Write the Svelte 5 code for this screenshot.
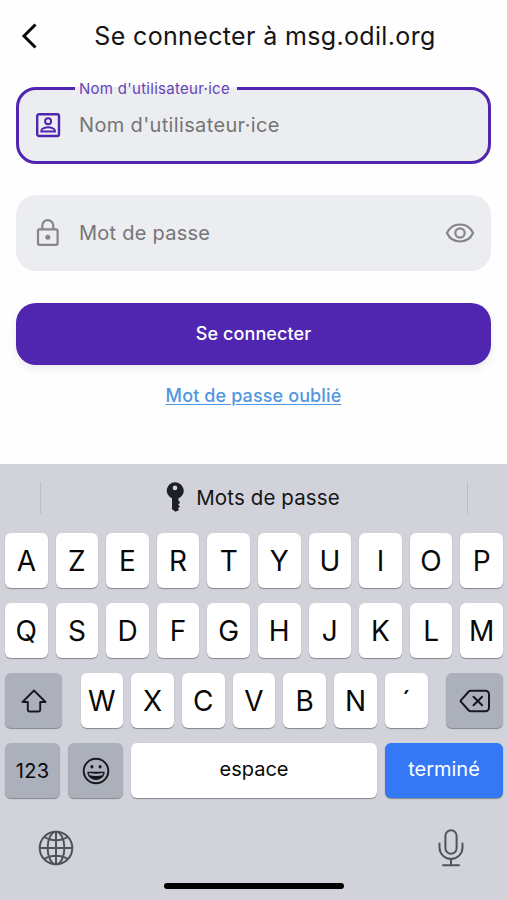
<script lang="ts">
    const topRow = ['A', 'Z', 'E', 'R', 'T', 'Y', 'U', 'I', 'O', 'P'];
    const homeRow = ['Q', 'S', 'D', 'F', 'G', 'H', 'J', 'K', 'L', 'M'];
    const bottomRow = ['W', 'X', 'C', 'V', 'B', 'N', '´'];
</script>

<div class="screen">
    <header class="header">
        <button class="back" aria-label="Retour">
            <svg width="18" height="28" viewBox="0 0 18 28">
                <path d="M16.500 2.500 L5 14 L16.500 25.500" fill="none" stroke="#0a0a0a" stroke-width="3" />
            </svg>
        </button>
        <h1 class="title">Se connecter à msg.odil.org</h1>
    </header>

    <main class="form">
        <fieldset class="field focused">
            <legend>Nom d'utilisateur·ice</legend>
            <svg class="lead" width="32" height="32" viewBox="0 0 32 32" fill="none" stroke="currentColor" stroke-width="2.400">
                <rect x="5.200" y="5.200" width="21.800" height="21.800" rx="1.800" />
                <circle cx="16.100" cy="12.300" r="3" stroke-width="2" />
                <path d="M9.300 22.600v-.8c0-2.300 4.300-3.600 6.800-3.600s6.800 1.300 6.800 3.600v.8z" stroke-width="2" />
            </svg>
            <span class="placeholder">Nom d'utilisateur·ice</span>
        </fieldset>

        <div class="field password">
            <svg class="lead" width="32" height="32" viewBox="0 0 32 32" fill="none" stroke="currentColor" stroke-width="2.200">
                <rect x="6" y="12.300" width="19.600" height="15.500" rx="1.500" />
                <path d="M10.300 12.300V8.600a5.500 5.500 0 0 1 11 0V12.300" />
                <circle cx="15.800" cy="20.300" r="2.500" fill="currentColor" stroke="none" />
            </svg>
            <span class="placeholder">Mot de passe</span>
            <svg class="eye" width="30" height="24" viewBox="0 0 30 24" fill="none" stroke="currentColor" stroke-width="2.200">
                <path d="M2 12C4.500 6.500 9.300 3.500 15 3.500S25.500 6.500 28 12C25.500 17.500 20.700 20.500 15 20.500S4.500 17.500 2 12z" />
                <circle cx="15" cy="12" r="4.700" />
            </svg>
        </div>

        <button class="submit">Se connecter</button>
        <a class="forgot" href="#forgot">Mot de passe oublié</a>
    </main>

    <section class="keyboard">
        <div class="suggestions">
            <svg width="18" height="30" viewBox="0 0 18 30">
                <path
                    fill="#1f2023"
                    fill-rule="evenodd"
                    d="M9 0.300a8.700 8.300 0 0 1 3.500 15.900v2.500l1.700 1.800-2 2 1.700 1.900-1.900 2 1.200 1.500L9.500 29.800 6 27.300V16.200A8.700 8.300 0 0 1 9 .3zM9 3.600a2.300 2.300 0 1 0 0 4.600 2.300 2.300 0 0 0 0-4.600z"
                />
            </svg>
            <span>Mots de passe</span>
        </div>

        <div class="row">
            {#each topRow as letter}
                <button class="key">{letter}</button>
            {/each}
        </div>
        <div class="row">
            {#each homeRow as letter}
                <button class="key">{letter}</button>
            {/each}
        </div>
        <div class="row spread">
            <button class="key dark wide" aria-label="Majuscule">
                <svg width="28" height="26" viewBox="0 0 28 26">
                    <path d="M14 2.500 L25.500 14 H20.200 V22 a1.500 1.500 0 0 1-1.500 1.500 H9.300 A1.500 1.500 0 0 1 7.800 22 V14 H2.500z" fill="none" stroke="#16181d" stroke-width="1.900" stroke-linejoin="round" />
                </svg>
            </button>
            <div class="letters">
                {#each bottomRow as letter}
                    <button class="key">{letter}</button>
                {/each}
            </div>
            <button class="key dark wide" aria-label="Supprimer">
                <svg width="32" height="24" viewBox="0 0 32 24" fill="none" stroke="#16181d" stroke-width="2" stroke-linejoin="round" stroke-linecap="round">
                    <path d="M11.800 1.700H26.500a3.500 3.500 0 0 1 3.500 3.500V18.800a3.500 3.500 0 0 1-3.500 3.500H11.800a3 3 0 0 1-2-.8L2.300 13.200a1.700 1.700 0 0 1 0-2.400L9.800 2.500a3 3 0 0 1 2-.8z" />
                    <path d="M14.500 7.700l8.600 8.600M23.100 7.700l-8.600 8.600" />
                </svg>
            </button>
        </div>
        <div class="row">
            <button class="key dark small numbers">123</button>
            <button class="key dark small" aria-label="Emoji">
                <svg width="28" height="28" viewBox="0 0 28 28">
                    <circle cx="14" cy="14" r="12.300" fill="none" stroke="#16181d" stroke-width="1.900" />
                    <ellipse cx="9.900" cy="9.800" rx="1.500" ry="1.700" fill="#16181d" />
                    <ellipse cx="18.100" cy="9.800" rx="1.500" ry="1.700" fill="#16181d" />
                    <path d="M5.300 14.800h17.400c0 4.700-3.700 8.100-8.700 8.100s-8.700-3.400-8.700-8.100z" fill="#16181d" />
                    <path d="M6.800 16.100c4.800.8 9.600.8 14.400 0l-.8 2.200c-4.300 1-8.500 1-12.800 0z" fill="#abb0bb" />
                </svg>
            </button>
            <button class="key space">espace</button>
            <button class="key done">terminé</button>
        </div>

        <div class="bottom">
            <svg width="36" height="36" viewBox="0 0 36 36" fill="none" stroke="#50535a" stroke-width="2">
                <circle cx="18" cy="18" r="16.300" />
                <ellipse cx="18" cy="18" rx="8.400" ry="16.300" />
                <path d="M18 1.500v33M1.500 18h33M6.200 6.800c6.500 4.600 17.100 4.600 23.600 0M6.200 29.200c6.500-4.600 17.100-4.600 23.600 0" />
            </svg>
            <svg width="28" height="38" viewBox="0 0 28 38" fill="none" stroke="#50535a" stroke-width="2" stroke-linecap="round">
                <rect x="8.400" y="1.200" width="11.200" height="23.600" rx="5.600" />
                <path d="M2.500 14.500v4a11.500 11.500 0 0 0 23 0V14.500M14 30v6M6 36.300h16" />
            </svg>
        </div>
        <div class="home-bar"></div>
    </section>
</div>

<style>
    :global(body) {
        margin: 0;
        background: #fefefe;
    }
    .screen {
        display: flex;
        flex-direction: column;
        width: 507px;
        height: 900px;
        overflow: hidden;
        color: #151515;
        font-family: 'Inter', sans-serif;
    }
    button {
        margin: 0;
        padding: 0;
        border: none;
        background: none;
        color: inherit;
        font-family: inherit;
    }
    svg {
        display: block;
        flex: none;
    }

    /* title bar */
    .header {
        display: grid;
        grid-template-columns: 60px 1fr 37px;
        align-items: center;
        height: 72px;
    }
    .back {
        padding-left: 19px;
    }
    .title {
        margin: 0;
        font-size: 25px;
        font-weight: 400;
        text-align: center;
        letter-spacing: 0.35px;
        white-space: nowrap;
    }

    /* login form */
    .form {
        display: flex;
        flex-direction: column;
        height: 392px;
        padding: 0 16px;
        box-sizing: border-box;
    }
    .field {
        display: flex;
        align-items: center;
        box-sizing: border-box;
        margin: 0;
        background: #ecedf0;
        border-radius: 20px;
        color: #858688;
    }
    .focused {
        height: 86px;
        margin-top: 6px;
        padding: 11px 15px 0 13px;
        border: 3px solid #5026b0;
        color: #5026b0;
    }
    legend {
        height: 20px;
        margin-left: 43px;
        padding: 0 7px 0 4px;
        color: #6644ba;
        font-size: 15px;
        line-height: 21px;
        letter-spacing: 0.28px;
        white-space: nowrap;
    }
    .placeholder {
        margin-left: 15px;
        flex: 1;
        color: #747577;
        font-size: 20px;
        letter-spacing: 0.35px;
    }
    .password {
        height: 76px;
        margin-top: 31px;
        padding: 0 16px;
    }
    .password .placeholder {
        letter-spacing: 0.25px;
    }
    .submit {
        height: 62px;
        margin-top: 32px;
        padding-bottom: 2px;
        border-radius: 20px;
        background: #5026b0;
        box-shadow: 0 4px 8px rgba(0, 0, 0, 0.08);
        color: #fff;
        font-size: 18px;
        font-weight: 500;
        letter-spacing: 0.1px;
    }
    .forgot {
        align-self: center;
        margin-top: 20px;
        color: #5097df;
        font-size: 18px;
        font-weight: 500;
        line-height: 22px;
        letter-spacing: 0.12px;
        text-underline-offset: 2px;
    }

    /* on-screen keyboard */
    .keyboard {
        display: flex;
        flex-direction: column;
        flex: 1;
        gap: 15px;
        padding: 0 4px 0 5px;
        background: #d1d2da;
    }
    .suggestions {
        display: flex;
        align-items: center;
        justify-content: center;
        gap: 12px;
        height: 32px;
        margin: 18px 35px 4px;
        padding: 0 2px 2px 0;
        box-sizing: border-box;
        border-left: 1px solid #bdbec5;
        border-right: 1px solid #bdbec5;
        font-size: 20.5px;
        letter-spacing: 0.12px;
    }
    .row {
        display: flex;
        gap: 8px;
        height: 55px;
    }
    .spread {
        justify-content: space-between;
    }
    .letters {
        display: flex;
        gap: 8px;
        width: 347px;
    }
    .key {
        display: flex;
        flex: 1 1 0;
        align-items: center;
        justify-content: center;
        border-radius: 6px;
        background: #fff;
        box-shadow: 0 1px 1px #85878d;
        color: #080808;
        font-size: 28px;
    }
    .dark {
        background: #abb0bb;
    }
    .wide {
        flex: none;
        width: 57px;
    }
    .small {
        flex: none;
        width: 55px;
    }
    .numbers {
        font-size: 20px;
        letter-spacing: 0.3px;
    }
    .space {
        padding-bottom: 3px;
        font-size: 20px;
    }
    .done {
        flex: none;
        width: 118px;
        box-sizing: border-box;
        padding-bottom: 3px;
        background: #3478f6;
        color: #fff;
        font-size: 20px;
    }
    .bottom {
        display: flex;
        align-items: center;
        justify-content: space-between;
        height: 38px;
        margin-top: 15px;
        padding: 1px 38px 0 33px;
    }
    .home-bar {
        align-self: center;
        width: 180px;
        height: 6px;
        margin-top: 1px;
        border-radius: 3px;
        background: #000;
    }
</style>
